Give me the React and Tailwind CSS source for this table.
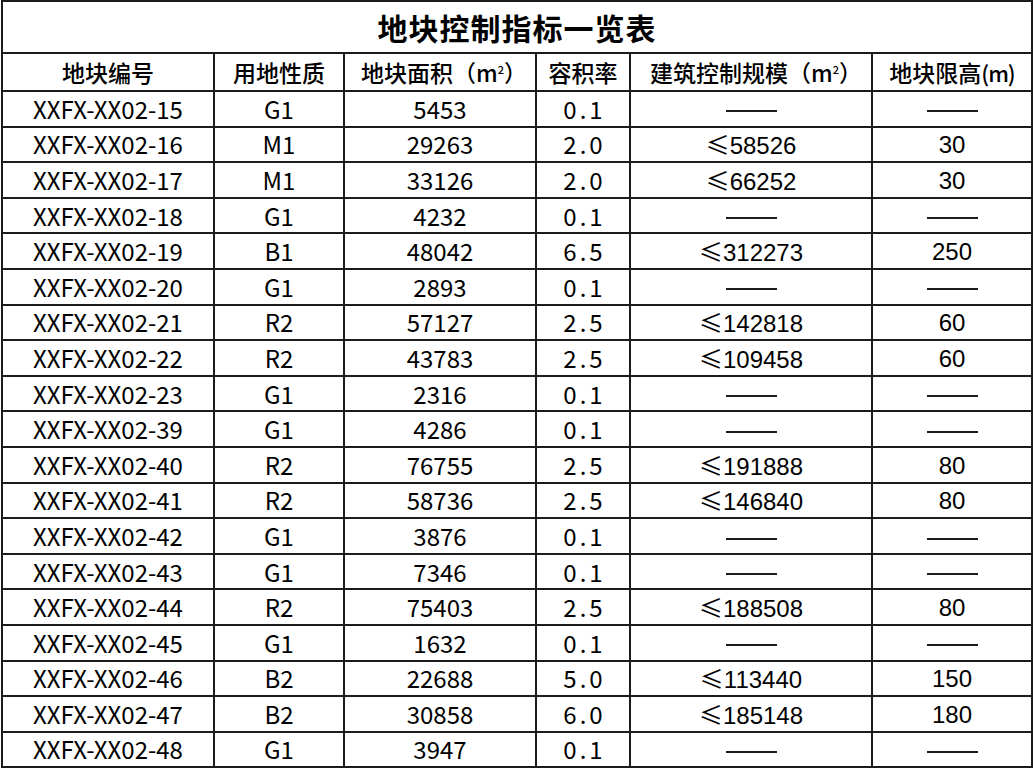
import React from 'react';

const rows = [
  ['XXFX-XX02-15', 'G1', '5453', '0.1', null, null],
  ['XXFX-XX02-16', 'M1', '29263', '2.0', '58526', '30'],
  ['XXFX-XX02-17', 'M1', '33126', '2.0', '66252', '30'],
  ['XXFX-XX02-18', 'G1', '4232', '0.1', null, null],
  ['XXFX-XX02-19', 'B1', '48042', '6.5', '312273', '250'],
  ['XXFX-XX02-20', 'G1', '2893', '0.1', null, null],
  ['XXFX-XX02-21', 'R2', '57127', '2.5', '142818', '60'],
  ['XXFX-XX02-22', 'R2', '43783', '2.5', '109458', '60'],
  ['XXFX-XX02-23', 'G1', '2316', '0.1', null, null],
  ['XXFX-XX02-39', 'G1', '4286', '0.1', null, null],
  ['XXFX-XX02-40', 'R2', '76755', '2.5', '191888', '80'],
  ['XXFX-XX02-41', 'R2', '58736', '2.5', '146840', '80'],
  ['XXFX-XX02-42', 'G1', '3876', '0.1', null, null],
  ['XXFX-XX02-43', 'G1', '7346', '0.1', null, null],
  ['XXFX-XX02-44', 'R2', '75403', '2.5', '188508', '80'],
  ['XXFX-XX02-45', 'G1', '1632', '0.1', null, null],
  ['XXFX-XX02-46', 'B2', '22688', '5.0', '113440', '150'],
  ['XXFX-XX02-47', 'B2', '30858', '6.0', '185148', '180'],
  ['XXFX-XX02-48', 'G1', '3947', '0.1', null, null],
];

const cjk = { fontFamily: '"Noto Sans CJK SC", "Noto Sans", sans-serif' };
const arial = { fontFamily: '"Liberation Sans", "Noto Sans CJK SC", sans-serif' };

const cell = 'border-2 border-[#1c1c1c] text-center p-0 leading-none';

function Dash() {
  return <span className="inline-block w-[51px] h-[2px] bg-[#1c1c1c] align-middle" />;
}

// unit label: m with a small raised 2
function Sq() {
  return <span>m<sup className="text-[11px] -top-[8px]">2</sup></span>;
}

export default function App() {
  return (
    <div className="bg-white w-[1034px] h-[770px] overflow-hidden text-black">
      <table className="border-collapse ml-px w-[1030px] table-fixed" style={cjk}>
        <colgroup>
          <col className="w-[212px]" />
          <col className="w-[130px]" />
          <col className="w-[192px]" />
          <col className="w-[94px]" />
          <col className="w-[242px]" />
          <col className="w-[160px]" />
        </colgroup>
        <thead>
          <tr className="h-[52px]">
            <th colSpan={6} className={`${cell} text-[30px] font-bold tracking-[1px]`}>地块控制指标一览表</th>
          </tr>
          <tr className="h-[38px] text-[23px]">
            <th className={`${cell} font-medium`}>地块编号</th>
            <th className={`${cell} font-medium`}>用地性质</th>
            <th className={`${cell} font-medium pl-[8px]`}>地块面积（<Sq />）</th>
            <th className={`${cell} font-medium`}>容积率</th>
            <th className={`${cell} font-medium pl-[10px]`}>建筑控制规模（<Sq />）</th>
            <th className={`${cell} font-medium`}>地块限高<span className="text-[22px] tracking-[-1px]">(m)</span></th>
          </tr>
        </thead>
        <tbody className="text-[24px]">
          {rows.map(r => (
            <tr key={r[0]} className="h-[35.6px]">
              <td className={cell}>{r[0]}</td>
              <td className={cell}>{r[1]}</td>
              <td className={cell}>{r[2]}</td>
              <td className={`${cell} tracking-[3px] pl-[3px]`}>{r[3]}</td>
              <td className={`${cell} pt-[2px]`} style={arial}>{r[4] ? <span><span style={cjk}>≤</span>{r[4]}</span> : <Dash />}</td>
              <td className={`${cell} pt-[2px]`} style={arial}>{r[5] ? r[5] : <Dash />}</td>
            </tr>
          ))}
        </tbody>
      </table>
    </div>
  );
}
